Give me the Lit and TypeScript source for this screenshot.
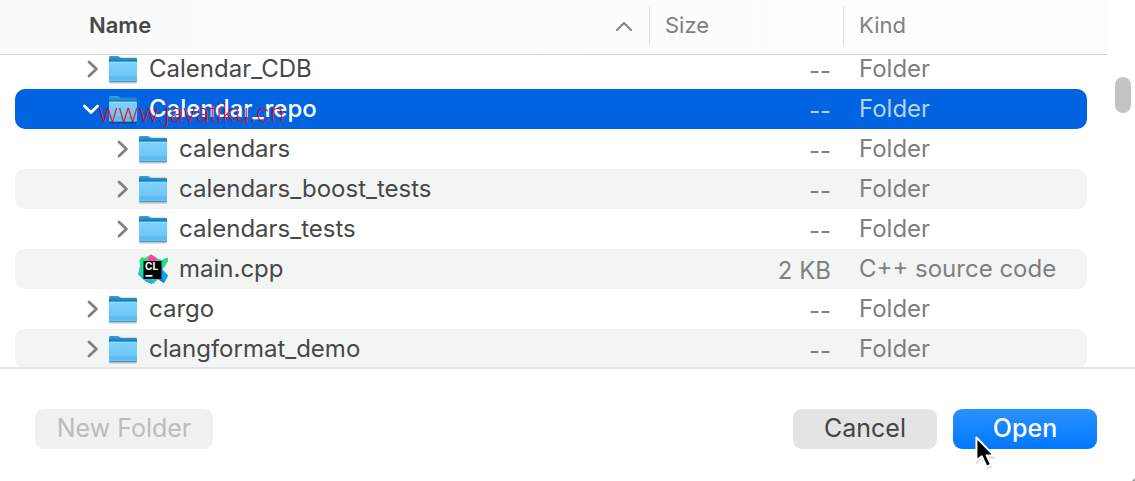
import { LitElement, html, css, svg, nothing } from "lit";
import { customElement, property, state } from "lit/decorators.js";
import { classMap } from "lit/directives/class-map.js";

interface Entry {
  name: string;
  size: string;
  kind: string;
  icon: "folder" | "clion";
  depth: number;
  open?: boolean;
  selected?: boolean;
  mark?: string;
}

const ENTRIES: Entry[] = [
  { name: "Calendar_CDB", size: "--", kind: "Folder", icon: "folder", depth: 0 },
  { name: "Calendar_repo", size: "--", kind: "Folder", icon: "folder", depth: 0, open: true, selected: true, mark: "www.javatiku.cn" },
  { name: "calendars", size: "--", kind: "Folder", icon: "folder", depth: 1 },
  { name: "calendars_boost_tests", size: "--", kind: "Folder", icon: "folder", depth: 1 },
  { name: "calendars_tests", size: "--", kind: "Folder", icon: "folder", depth: 1 },
  { name: "main.cpp", size: "2 KB", kind: "C++ source code", icon: "clion", depth: 1 },
  { name: "cargo", size: "--", kind: "Folder", icon: "folder", depth: 0 },
  { name: "clangformat_demo", size: "--", kind: "Folder", icon: "folder", depth: 0 },
];

@customElement("file-icon")
export class FileIcon extends LitElement {
  static styles = css`
    :host { display: block; width: 30px; height: 32px; }
    .glyph { display: block; width: 30px; height: 32px; }
    .cl { font: 700 10px "Inter", sans-serif; }
  `;

  @property() kind = "folder";

  private folder() {
    return svg`
      <defs>
        <linearGradient id="back" x1="0" y1="0" x2="0" y2="1">
          <stop offset="0" stop-color="#3ba3dc"></stop><stop offset=".6" stop-color="#1379ba"></stop>
        </linearGradient>
        <linearGradient id="front" x1="0" y1="0" x2="0" y2="1">
          <stop offset="0" stop-color="#7dd2fc"></stop><stop offset="1" stop-color="#68c1f3"></stop>
        </linearGradient>
      </defs>
      <rect x="1" y="27" width="28" height="3.4" rx="1.5" fill="#000" opacity=".24"></rect>
      <path d="M1 4.4Q1 3 2.4 3H9.5Q10.6 3 11.4 3.7L12.2 4.3Q12.8 4.8 13.8 4.8H27.6Q29 4.8 29 6.2V12H1Z" fill="url(#back)"></path>
      <path d="M1 10Q1 8.8 2.2 8.8H27.8Q29 8.8 29 10V27.4Q29 28.8 27.6 28.8H2.4Q1 28.8 1 27.4Z" fill="url(#front)"></path>
      <path d="M1.6 9.3H28.4" stroke="#9be0ff" stroke-width="1"></path>
      <path d="M1 24H29M1 25.8H29" stroke="#4fabe0" stroke-width=".8" opacity=".8"></path>
      <path d="M1.5 28.5H28.5" stroke="#3d94c8" stroke-width=".9"></path>`;
  }

  private clion() {
    return svg`
      <defs>
        <linearGradient id="g1" x1="0" y1="0" x2="0" y2="1">
          <stop offset="0" stop-color="#2ee56b"></stop><stop offset=".55" stop-color="#21d3a5"></stop><stop offset="1" stop-color="#1a9cf0"></stop>
        </linearGradient>
        <linearGradient id="g2" x1="0" y1="0" x2="1" y2="1">
          <stop offset="0" stop-color="#22d88f"></stop><stop offset="1" stop-color="#14b9e6"></stop>
        </linearGradient>
      </defs>
      <path d="M1.5 7L4 4L7 5L13 1.6L16 3L15 18L16 27L14 31L8 28.5L6 27L0 21L2 14Z" fill="url(#g1)"></path>
      <path d="M1 15L6 13V27L3 23Z" fill="#1fdc9a"></path>
      <path d="M0 21L5 20L8 27L5 26Z" fill="#16c7c4"></path>
      <path d="M6 26H16L14 31L8 28.5Z" fill="#15b4e8"></path>
      <path d="M17 5L24 7L29.5 4.5L30 8L27 13L24 17L30 23L26 30L20 26L15 31L13 24L16 15Z" fill="url(#g2)"></path>
      <path d="M24 16L30 22.5L26 30L20 26Z" fill="#109ef2"></path>
      <path d="M20 26H25L26 30Z" fill="#1577ed"></path>
      <path d="M11 3L13 1.6L19 5L17 9H9Z" fill="#f9479c"></path>
      <path d="M24 7L29.5 4.5L30 8L26 13H24Z" fill="#26df81"></path>
      <rect x="5.5" y="8" width="18" height="18" fill="#000"></rect>
      <text class="cl" x="7" y="17" fill="#fff">CL</text>
      <rect x="7.5" y="22" width="7" height="1.7" fill="#fff"></rect>`;
  }

  render() {
    return html`<svg class="glyph" viewBox="0 0 30 32" aria-hidden="true">
      ${this.kind === "folder" ? this.folder() : this.clion()}
    </svg>`;
  }
}

@customElement("app-root")
export class AppRoot extends LitElement {
  static styles = css`
    :host {
      display: flex;
      flex-direction: column;
      min-height: 100vh;
      box-sizing: border-box;
      background: #fff;
      color: #484848;
      font: 400 24px/40px "Inter", sans-serif;
    }
    button { font: inherit; color: inherit; border: 0; padding: 0; background: none; }

    .browser { display: flex; border-bottom: 2px solid #e4e4e4; }
    .files { display: block; flex: 1; min-width: 0; }
    .head, .body { display: block; }
    .head {
      background: linear-gradient(90deg, #f9fafa, #fcfcfc 30%, #fdfdfd);
      border-bottom: 1px solid #d4d4d4;
    }
    .row { display: grid; grid-template-columns: minmax(0, 1fr) 194px 244px; }
    .titles { grid-template-columns: minmax(0, 1fr) 194px 264px; padding: 7px 0 9px; }
    .title {
      display: flex;
      align-items: center;
      justify-content: space-between;
      padding: 0 16px 2px 15px;
      border-left: 1px solid #dedede;
      font-size: 22px;
      line-height: 36px;
      font-weight: 400;
      text-align: left;
      color: #808080;
    }
    .title.main { padding-left: 89px; border-left: 0; font-weight: 600; color: #484848; }
    .sort { width: 18px; height: 12px; margin-top: 2px; }

    .body { height: 312px; overflow: hidden; }
    .item { margin: 0 20px 0 15px; border-radius: 10px; grid-template-rows: 40px; }
    .item:first-child { margin-top: -6px; }
    .item:nth-child(even) { background: #f3f5f5; }
    .item.selected { background: #0063e1; color: #fff; }
    .cell { padding: 0; white-space: nowrap; color: #7f7f7f; }
    .cell.name { position: relative; display: flex; align-items: center; padding-left: 66px; color: inherit; }
    .cell.nested { padding-left: 96px; }
    .cell.size { padding: 2px 12px 0 0; text-align: right; }
    .cell.kind { padding-left: 16px; }
    .selected .cell.size, .selected .cell.kind { color: #b8d2f7; }
    .toggle { display: flex; width: 27px; height: 40px; align-items: center; color: #808080; }
    .selected .toggle { color: #fff; }
    .chevron { display: block; width: 20px; height: 20px; }
    .label { padding-left: 11px; }
    .selected .label { font-weight: 500; }
    .mark {
      position: absolute;
      left: 83px;
      top: 4px;
      color: #f00000;
      font-size: 25px;
      font-weight: 200;
      pointer-events: none;
    }

    .track { flex: none; width: 28px; padding-top: 77px; box-sizing: border-box; }
    .thumb { width: 16px; height: 36px; margin-left: 8px; border-radius: 8px; background: #c4c4c4; }

    .actions { position: relative; display: flex; gap: 16px; padding: 40px 38px 32px 35px; }
    .action { height: 40px; border-radius: 9px; font-size: 25px; line-height: 38px; padding-bottom: 2px; }
    .create { width: 178px; margin-right: auto; background: #f1f1f1; color: #bcbcbc; }
    .cancel { width: 144px; background: #e4e4e4; color: #444; }
    .open {
      position: relative;
      width: 144px;
      background: linear-gradient(#2b91ff, #0077ff);
      color: #fff;
      font-weight: 500;
    }
    .pointer { position: absolute; left: 20px; top: 24px; width: 28px; height: 42px; }
    .grip { position: absolute; right: 0; bottom: 0; width: 3px; height: 3px; }
  `;

  @state() private selected = ENTRIES.findIndex((e) => e.selected);

  private chevron(open?: boolean) {
    return html`<svg class="chevron" viewBox="0 0 20 20" fill="none" stroke="currentColor"
      stroke-width="2.8" stroke-linecap="round" stroke-linejoin="round" aria-hidden="true">
      <path d=${open ? "M3.4 7L10 13.6L16.6 7" : "M8 3L15.4 10L8 17"}></path>
    </svg>`;
  }

  private row(e: Entry, i: number) {
    return html`<tr role="row" class=${classMap({ row: true, item: true, selected: i === this.selected })}
      @click=${() => (this.selected = i)}>
      <td role="cell" class=${classMap({ cell: true, name: true, nested: e.depth > 0 })}>
        <div class="toggle">
          ${e.icon === "folder"
            ? html`<button aria-label=${(e.open ? "Collapse " : "Expand ") + e.name}>${this.chevron(e.open)}</button>`
            : nothing}
        </div>
        <file-icon kind=${e.icon}></file-icon>
        <span class="label">${e.name}</span>
        ${e.mark ? html`<span class="mark">${e.mark}</span>` : nothing}
      </td>
      <td role="cell" class="cell size">${e.size}</td>
      <td role="cell" class="cell kind">${e.kind}</td>
    </tr>`;
  }

  render() {
    return html`
      <div class="browser">
        <table class="files" role="table">
          <thead class="head" role="rowgroup">
            <tr class="row titles" role="row">
              <th class="title main" role="columnheader" aria-sort="ascending">
                Name
                <svg class="sort" viewBox="0 0 18 12" fill="none" stroke="#808080" stroke-width="2"
                  stroke-linecap="round" stroke-linejoin="round" aria-hidden="true">
                  <path d="M2 10L9 3L16 10"></path>
                </svg>
              </th>
              <th class="title" role="columnheader">Size</th>
              <th class="title" role="columnheader">Kind</th>
            </tr>
          </thead>
          <tbody class="body" role="rowgroup">${ENTRIES.map((e, i) => this.row(e, i))}</tbody>
        </table>
        <div class="track"><div class="thumb"></div></div>
      </div>
      <div class="actions">
        <button class="action create" disabled>New Folder</button>
        <button class="action cancel">Cancel</button>
        <button class="action open">
          Open
          <svg class="pointer" viewBox="0 0 28 42" aria-hidden="true">
            <path d="M3 6V31L9 26.5L14 36.5L19.5 34L15 25.5H22.5Z" fill="#000" opacity=".15"></path>
            <path d="M3.4 4.5V27.6L8.8 23.4L13.6 33.6L18 31.6L13.6 22.4H20.8Z" fill="#000" stroke="#fff" stroke-width="2" stroke-linejoin="round"></path>
          </svg>
        </button>
        <svg class="grip" viewBox="0 0 3 3" aria-hidden="true"><path d="M3 0V3H0Z" fill="#999"></path></svg>
      </div>
    `;
  }
}
